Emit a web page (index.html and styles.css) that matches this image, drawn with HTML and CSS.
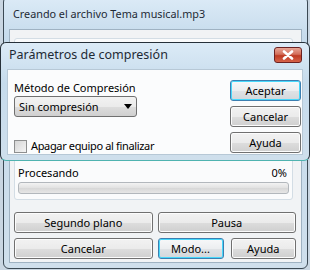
FILE: index.html
```html
<!DOCTYPE html>
<html lang="es">
<head>
	<meta charset="UTF-8">
	<title>Creando el archivo</title>
	<link rel="stylesheet" href="styles.css">
</head>
<body>
	<div class="desk">
		<div class="win main">
			<div class="title">Creando el archivo Tema musical.mp3</div>
			<div class="client">
				<div class="group">
					<div class="status">
						<span>Procesando</span>
						<span>0%</span>
					</div>
					<div class="bar"></div>
				</div>
				<div class="actions">
					<button class="btn">Segundo plano</button>
					<button class="btn">Pausa</button>
					<button class="btn">Cancelar</button>
					<div class="pair">
						<button class="btn focus">Modo...</button>
						<button class="btn">Ayuda</button>
					</div>
				</div>
			</div>
		</div>

		<div class="win dialog">
			<div class="title">
				<span>Parámetros de compresión</span>
				<span class="close">
					<svg width="14" height="10" viewBox="0 0 14 10"><path d="M3 1.5 L11 8.5 M11 1.5 L3 8.5" stroke="#fff" stroke-width="2.6" stroke-linecap="round"/></svg>
				</span>
			</div>
			<div class="client">
				<div class="options">
					<div class="label">Método de Compresión</div>
					<div class="combo">
						<span>Sin compresión</span>
						<svg class="arrow" width="8" height="5" viewBox="0 0 8 5"><path d="M0 0 H8 L4 5 Z" fill="#000"/></svg>
					</div>
					<label class="check"><span class="box"></span><span class="squeeze">Apagar equipo al finalizar</span></label>
				</div>
				<div class="side">
					<button class="btn focus">Aceptar</button>
					<button class="btn">Cancelar</button>
					<button class="btn">Ayuda</button>
				</div>
			</div>
		</div>
	</div>
</body>
</html>
```

FILE: styles.css
```css
* { margin:0;padding:0;box-sizing:border-box; }
body { width:310px;height:270px;overflow:hidden;background:#c9d6e2;font-family:"Noto Sans","Liberation Sans",sans-serif;font-size:11px;color:#000; }

.desk { position:relative;width:310px;height:270px; }

/* ventanas */
.win { border:1px solid #3b4954;border-radius:6px;background:linear-gradient(#dcebf7,#c6dbec 40px,#cfdfec);display:flex;flex-direction:column; }
.win .title { flex-shrink:0;display:flex;align-items:center;justify-content:space-between;padding:0 3px 0 6px;color:#1e2a35; }
.win .client { background:#f1f3f5;border:1px solid #9fb2c2; }

.main { position:absolute;left:3px;top:-4px;width:305px;height:273px;padding:0 5px 5px; }
.main .title { height:32px;font-size:10.8px;padding-left:4px; }
.main .client { flex:1;padding:8px 5px 0 4px;display:flex;flex-direction:column; }

.group { height:162px;margin-right:3px;border:1px solid #d3dde5;border-radius:3px;background:#fafbfc;display:flex;flex-direction:column;justify-content:flex-end;padding:0 3px 5px; }
.status { display:flex;justify-content:space-between;padding:0 2px 0 0;line-height:16px; }
.bar { height:12px;margin-top:1px;border:1px solid #b2b7bc;border-radius:3px;background:linear-gradient(#f3f3f3,#e1e1e1 50%,#d7d7d7 51%,#e6e6e6); }

.actions { display:grid;grid-template-columns:1fr 1fr;gap:5px 5px;margin-top:12px; }
.pair { display:flex;gap:7px; }
.pair .btn:first-child { width:66px; }
.pair .btn:last-child { flex:1; }

.btn { height:21px;font:inherit;color:#000;border:1px solid #707070;border-radius:3px;background:linear-gradient(#f2f2f2,#ebebeb 50%,#dddddd 51%,#cfcfcf);box-shadow:inset 0 0 0 1px #fcfcfc; }
.btn.focus { border-color:#3c7fb1;box-shadow:inset 0 0 0 1px #48d8fb;background:linear-gradient(#f7f8f9,#eceef0 50%,#e0e3e6 51%,#d3d7db); }

/* dialogo */
.dialog { position:absolute;left:0;top:42px;width:310px;height:119px;padding:0 6px 5px 6px;border-color:#27313a;border-bottom-color:#4fb3b0; }
.dialog .title { height:26px;font-size:12.5px;padding-left:2px;padding-bottom:3px; }
.close { width:28px;height:16px;margin-right:-2px;border:1px solid #6b2121;border-radius:3px;background:linear-gradient(#e8a696,#d36e5a 45%,#be3a22 55%,#d6634a);display:flex;align-items:center;justify-content:center; }
.dialog .client { flex:1;background:#fbfcfd;border-color:#b7c8d6;display:flex;justify-content:space-between;padding:10px 1px 0 6px; }

.options { display:flex;flex-direction:column; }
.label { line-height:16px; }
.combo { width:123px;height:21px;border:1px solid #707070;border-radius:3px;background:linear-gradient(#f2f2f2,#ebebeb 50%,#dddddd 51%,#cfcfcf);display:flex;justify-content:space-between;align-items:center;padding:0 4px 0 4px; }
.check { display:flex;align-items:center;gap:4px;margin-top:21px;line-height:16px; }
.squeeze { letter-spacing:-0.35px; }
.box { width:13px;height:13px;border:1px solid #8e8f8f;background:linear-gradient(135deg,#d6d6d6,#f4f4f4); }

.side { display:flex;flex-direction:column;gap:5px;width:71px; }
```
